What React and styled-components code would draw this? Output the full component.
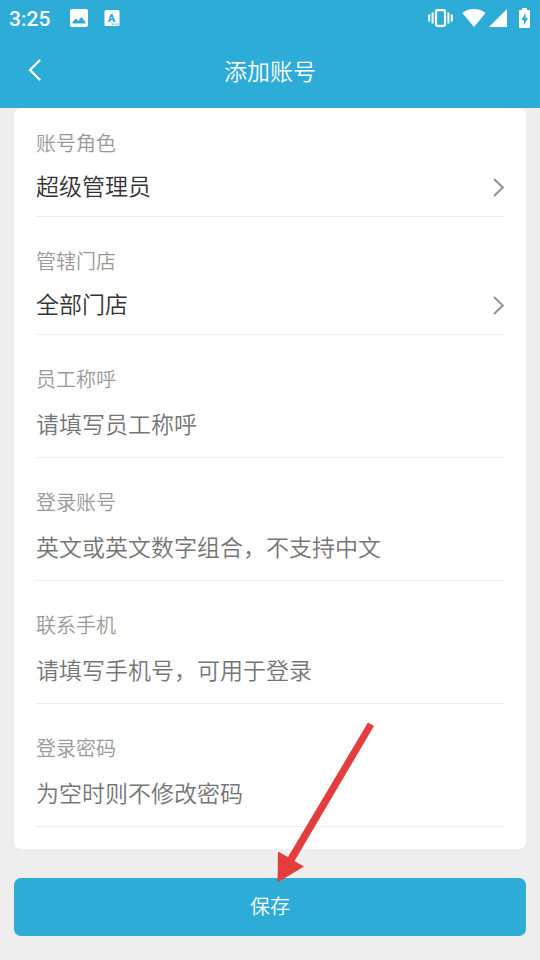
import React, { useState } from 'react'
import styled, { createGlobalStyle } from 'styled-components'

const GlobalStyle = createGlobalStyle`
  :root {
    --color-primary: #2eacd8;
    --color-page: #eeeeee;
    --color-line: #ececec;
    --color-label: #999999;
    --color-placeholder: #757575;
    --color-text: #333333;
  }

  *, *::before, *::after {
    box-sizing: border-box;
  }

  body {
    margin: 0;
    background-color: var(--color-page);
    font-family: 'Noto Sans CJK SC', sans-serif;
    font-weight: 350;
  }

  button, input, select {
    margin: 0;
    padding: 0;
    border: 0;
    font-family: inherit;
    font-weight: inherit;
  }
`

const TopArea = styled.div`
  background-color: var(--color-primary);
  color: #fff;
`

const StatusBar = styled.div`
  display: flex;
  align-items: center;
  justify-content: space-between;
  height: 36px;
  padding: 0 10px 0 9px;
`

const StatusGroup = styled.div`
  display: flex;
  align-items: center;
`

const LeftIcons = styled(StatusGroup)`
  gap: 16px;
  margin-left: 20px;
`

const Clock = styled.span`
  font-family: Roboto, sans-serif;
  font-size: 21px;
  font-weight: 500;
  line-height: 36px;
  padding-top: 2px;
`

const Header = styled.header`
  display: grid;
  grid-template-columns: 72px 1fr 72px;
  align-items: center;
  height: 72px;
  padding-bottom: 5px;
`

const BackButton = styled.button`
  display: flex;
  align-items: center;
  height: 68px;
  padding-left: 28px;
  background: none;
  color: inherit;
`

const Title = styled.h1`
  margin: 0;
  font-size: 23px;
  font-weight: inherit;
  line-height: 34px;
  text-align: center;
`

const Form = styled.form`
  padding: 0 14px 24px;
`

const Card = styled.div`
  padding: 21px 22px 22px;
  border-radius: 7px;
  background-color: #fff;
`

const FieldRow = styled.div`
  border-bottom: 1px solid var(--color-line);

  & + & {
    margin-top: 30px;
  }
`

const Label = styled.label`
  display: block;
  color: var(--color-label);
  font-size: 20px;
  line-height: 28px;
`

const SelectBox = styled.div`
  display: grid;
  align-items: center;

  > * {
    grid-area: 1 / 1;
  }

  > svg {
    justify-self: end;
    pointer-events: none;
  }
`

const Select = styled.select`
  appearance: none;
  width: 100%;
  height: 59px;
  padding-bottom: 4px;
  border-radius: 0;
  background: none;
  color: var(--color-text);
  font-size: 23px;
  outline: none;
`

const Input = styled.input`
  display: block;
  width: 100%;
  height: 64px;
  padding-bottom: 4px;
  background: none;
  color: var(--color-text);
  font-size: 23px;
  outline: none;

  &::placeholder {
    color: var(--color-placeholder);
    opacity: 1;
  }
`

const SaveArea = styled.div`
  position: relative;
  margin-top: 29px;
`

const SaveButton = styled.button`
  display: block;
  width: 100%;
  height: 58px;
  padding-bottom: 4px;
  border-radius: 7px;
  background-color: var(--color-primary);
  color: #fff;
  font-size: 20px;
`

const Pointer = styled.svg`
  position: absolute;
  bottom: 53px;
  left: 50%;
  margin-left: 7px;
  pointer-events: none;
`

const PictureIcon = () => (
  <svg width="18" height="18" viewBox="0 0 18 18" aria-hidden="true">
    <rect width="18" height="18" rx="2" fill="#fff" />
    <path d="M2.5 14.5v-1.6l3.3-3.7 2.4 2.7 3.2-3.8 4.1 4.8v1.6z" fill="#2eacd8" />
  </svg>
)

const LetterIcon = () => (
  <svg width="16" height="16" viewBox="0 0 16 16" aria-hidden="true">
    <rect x="0.5" width="15" height="16" rx="1.5" fill="#fff" />
    <text
      x="7.5"
      y="11.5"
      fill="#2eacd8"
      fontFamily="Roboto, sans-serif"
      fontSize="11"
      fontWeight="900"
      textAnchor="middle"
    >
      A
    </text>
    <path d="M8 13.5h1.3v1.2H8zM10.5 13.5h1.3v1.2h-1.3zM13 13.5h1.3v1.2H13z" fill="#2eacd8" />
  </svg>
)

const VibrateIcon = () => (
  <svg width="25" height="18" viewBox="0 0 25 18" aria-hidden="true">
    <rect x="8" y="1.2" width="9" height="15.6" rx="1" fill="none" stroke="#fff" strokeWidth="2.2" />
    <path d="M1.2 5.5v7M4.6 3.5v11M20.4 3.5v11M23.8 5.5v7" stroke="#fff" strokeWidth="2" />
  </svg>
)

const WifiIcon = () => (
  <svg width="24" height="18" viewBox="0 0 24 18" aria-hidden="true">
    <path d="M12 18 .8 4.400Q.4 3.800 1 3.400C4.200 1.100 8 0 12 0s7.800 1.100 11 3.400q.6.400.2 1z" fill="#fff" />
  </svg>
)

const SignalIcon = () => (
  <svg width="18" height="18" viewBox="0 0 18 18" aria-hidden="true">
    <path d="M18 0v18H0z" fill="#fff" />
  </svg>
)

const BatteryIcon = () => (
  <svg width="11" height="20" viewBox="0 0 11 20" aria-hidden="true">
    <path
      d="M3.2 0h4.6v2H10a1 1 0 0 1 1 1v16a1 1 0 0 1-1 1H1a1 1 0 0 1-1-1V3a1 1 0 0 1 1-1h2.2z"
      fill="#fff"
    />
    <path d="M6.5 5 2.3 12h2.5v5.5L9 10H6.5z" fill="#2eacd8" />
  </svg>
)

const StatusIcons = styled(StatusGroup)`
  svg + svg {
    margin-left: 3px;
  }

  svg:nth-child(2) {
    margin-left: 9px;
  }

  svg:last-child {
    margin-left: 12px;
  }
`

const BackIcon = () => (
  <svg width="13" height="22" viewBox="0 0 13 22" aria-hidden="true">
    <path
      d="M11.5 1.5 2 11l9.500 9.500"
      fill="none"
      stroke="#fff"
      strokeWidth="2.3"
      strokeLinecap="round"
      strokeLinejoin="round"
    />
  </svg>
)

const ArrowIcon = () => (
  <svg width="11" height="20" viewBox="0 0 11 20" aria-hidden="true">
    <path d="M1 2 9.800 10.500 1 19" fill="none" stroke="#96918f" strokeWidth="2" />
  </svg>
)

const pickers = [
  { id: 'role', label: '账号角色', value: '超级管理员' },
  { id: 'store', label: '管辖门店', value: '全部门店' },
]

const inputs = [
  { id: 'name', label: '员工称呼', type: 'text', placeholder: '请填写员工称呼' },
  { id: 'account', label: '登录账号', type: 'text', placeholder: '英文或英文数字组合，不支持中文' },
  { id: 'phone', label: '联系手机', type: 'tel', placeholder: '请填写手机号，可用于登录' },
  { id: 'password', label: '登录密码', type: 'password', placeholder: '为空时则不修改密码' },
]

export default function App() {
  const [values, setValues] = useState({ name: '', account: '', phone: '', password: '' })

  const handleChange = (e) => {
    setValues({ ...values, [e.target.name]: e.target.value })
  }

  return (
    <>
      <GlobalStyle />
      <TopArea>
        <StatusBar>
          <StatusGroup>
            <Clock>3:25</Clock>
            <LeftIcons>
              <PictureIcon />
              <LetterIcon />
            </LeftIcons>
          </StatusGroup>
          <StatusIcons>
            <VibrateIcon />
            <WifiIcon />
            <SignalIcon />
            <BatteryIcon />
          </StatusIcons>
        </StatusBar>
        <Header>
          <BackButton type="button" aria-label="返回">
            <BackIcon />
          </BackButton>
          <Title>添加账号</Title>
        </Header>
      </TopArea>

      <Form onSubmit={(e) => e.preventDefault()}>
        <Card>
          {pickers.map(({ id, label, value }) => (
            <FieldRow key={id}>
              <Label htmlFor={id}>{label}</Label>
              <SelectBox>
                <Select id={id} name={id}>
                  <option>{value}</option>
                </Select>
                <ArrowIcon />
              </SelectBox>
            </FieldRow>
          ))}
          {inputs.map(({ id, label, type, placeholder }) => (
            <FieldRow key={id}>
              <Label htmlFor={id}>{label}</Label>
              <Input
                id={id}
                name={id}
                type={type}
                placeholder={placeholder}
                value={values[id]}
                onChange={handleChange}
              />
            </FieldRow>
          ))}
        </Card>

        <SaveArea>
          <SaveButton type="submit">保存</SaveButton>
          <Pointer width="98" height="162" viewBox="0 0 98 162" aria-hidden="true">
            <path d="M91 1.5 97 5 17.5 140 27 145.500 0.500 161.500 1 130.500 11 136z" fill="#e43d3d" />
          </Pointer>
        </SaveArea>
      </Form>
    </>
  )
}
